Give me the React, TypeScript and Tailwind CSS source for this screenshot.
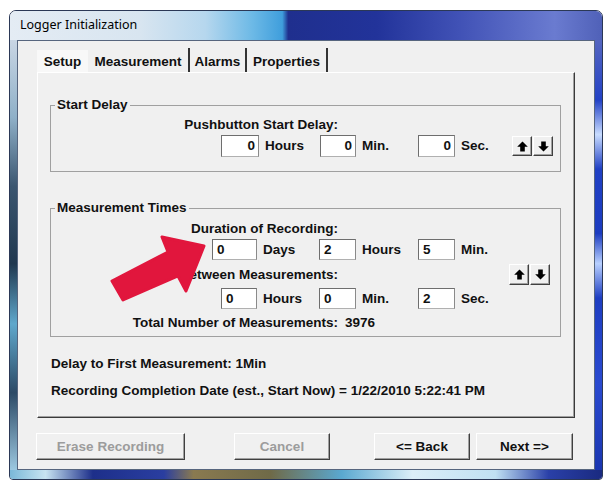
import React from "react";

const ui = "font-['Liberation_Sans',Arial,sans-serif] font-bold text-[13.5px] leading-[16px] text-[#111]";
const raised =
  "bg-[#f0f0f0] border border-t-white border-l-white border-r-[#404040] border-b-[#404040] shadow-[inset_-1px_-1px_0_#a0a0a0]";
const sunken =
  "bg-white border border-t-[#6e6e6e] border-l-[#6e6e6e] border-r-[#8a8a8a] border-b-[#b0b0b0]";

function UpArrow() {
  return (
    <svg width="11" height="11" viewBox="0 0 11 11">
      <path d="M5.5 0.5 L10.8 5.8 H7.8 V10.5 H3.2 V5.8 H0.2 Z" fill="#000" />
    </svg>
  );
}

function DownArrow() {
  return (
    <svg width="11" height="11" viewBox="0 0 11 11">
      <path d="M5.5 10.5 L10.8 5.2 H7.8 V0.5 H3.2 V5.2 H0.2 Z" fill="#000" />
    </svg>
  );
}

function Spin({ h }: { h: string }) {
  return (
    <div className="flex gap-[1px]">
      <div className={`${raised} ${h} w-[20px] flex items-center justify-center`}>
        <UpArrow />
      </div>
      <div className={`${raised} ${h} w-[20px] flex items-center justify-center`}>
        <DownArrow />
      </div>
    </div>
  );
}

function Field({ seg, box, h, value, unit, right }: { seg: string; box: string; h: string; value: string; unit: string; right?: boolean }) {
  return (
    <div className={`flex items-center gap-[6px] ${seg}`}>
      <div className={`${sunken} ${box} ${h} flex items-center ${right ? "justify-end pr-[3px]" : "pl-[4px]"}`}>{value}</div>
      <span>{unit}</span>
    </div>
  );
}

function GroupBox({ title, className, children }: { title: string; className: string; children: React.ReactNode }) {
  return (
    <fieldset className={`ml-[12px] w-[511px] border border-[#a0a0a0] ${className}`}>
      <legend className="ml-[4px] px-[2px] leading-[16px]">{title}</legend>
      {children}
    </fieldset>
  );
}

export default function App() {
  return (
    <div className="relative w-[616px] h-[492px] bg-white overflow-hidden">
      <div className="ml-[9px] mt-[10px] w-[594px] h-[470px] flex flex-col rounded-t-[7px] rounded-b-[4px] overflow-hidden border border-[#2b3856]">
        {/* title bar */}
        <div className="h-[29px] shrink-0 flex items-center pl-[10px] pb-[1px] bg-[linear-gradient(to_right,#e4ecf4_0%,#d8e5f0_22%,#b6d7ee_33%,#6cb9e6_41%,#3f9edc_46%,#1f2f8e_47%,#22339a_62%,#4152b6_76%,#6a7bd0_92%,#5061b8_100%)]">
          <span className="font-['Noto_Sans','Lato',sans-serif] text-[12.5px] text-black">Logger Initialization</span>
        </div>
        <div className="flex flex-1">
          <div className="w-[7px] bg-[linear-gradient(to_bottom,#c9d6e4_0%,#8fb0c8_18%,#3b5670_34%,#20384f_52%,#5fa8cc_66%,#2c4a66_82%,#9cc8e0_100%)]" />
          {/* client */}
          <div className={`${ui} w-[578px] h-[430px] border border-[#56657e] bg-[#f0f0f0]`}>
            {/* tabs */}
            <div className="flex h-[25px] ml-[19px] mt-[6px]">
              <div className="w-[51px] mt-[3px] bg-[#f8f8f8] flex items-center justify-center pt-[2px]">Setup</div>
              <div className="w-[102px] mt-[1px] border-r-2 border-[#333] flex items-center justify-center pt-[4px]">Measurement</div>
              <div className="w-[57px] mt-[1px] border-r-2 border-[#333] flex items-center justify-center pt-[4px]">Alarms</div>
              <div className="w-[81px] mt-[1px] border-r-2 border-[#333] flex items-center justify-center pt-[4px]">Properties</div>
            </div>
            {/* panel */}
            <div className="ml-[19px] w-[538px] h-[346px] border border-t-white border-l-white border-r-[#3a3a3a] border-b-[#3a3a3a] shadow-[inset_-1px_-1px_0_#a0a0a0] pt-[24px]">
              <GroupBox title="Start Delay" className="pt-[4px] pb-[14px]">
                <div className="w-[287px] text-right">Pushbutton Start Delay:</div>
                <div className="flex items-center h-[22px] mt-[2px] pl-[170px]">
                  <Field seg="w-[99px]" box="w-[38px]" h="h-[22px]" value="0" unit="Hours" right />
                  <Field seg="w-[98px]" box="w-[36px]" h="h-[22px]" value="0" unit="Min." right />
                  <Field seg="w-[94px]" box="w-[37px]" h="h-[22px]" value="0" unit="Sec." right />
                  <Spin h="h-[20px]" />
                </div>
              </GroupBox>
              <GroupBox title="Measurement Times" className="mt-[28px] pt-[5px] pb-[5px]">
                <div className="w-[287px] text-right">Duration of Recording:</div>
                <div className="flex items-center h-[21px] mt-[2px] pl-[161px]">
                  <Field seg="w-[107px]" box="w-[45px]" h="h-[21px]" value="0" unit="Days" />
                  <Field seg="w-[99px]" box="w-[37px]" h="h-[21px]" value="2" unit="Hours" />
                  <Field seg="w-[94px]" box="w-[37px]" h="h-[21px]" value="5" unit="Min." />
                </div>
                <div className="flex items-center h-[21px] mt-[4px]">
                  <div className="w-[287px] text-right">Time Between Measurements:</div>
                  <div className="ml-[171px]">
                    <Spin h="h-[21px]" />
                  </div>
                </div>
                <div className="flex items-center h-[21px] mt-[3px] pl-[170px]">
                  <Field seg="w-[98px]" box="w-[36px]" h="h-[21px]" value="0" unit="Hours" />
                  <Field seg="w-[99px]" box="w-[37px]" h="h-[21px]" value="0" unit="Min." />
                  <Field seg="w-[94px]" box="w-[37px]" h="h-[21px]" value="2" unit="Sec." />
                </div>
                <div className="flex mt-[6px]">
                  <div className="w-[287px] text-right">Total Number of Measurements:</div>
                  <span className="ml-[7px]">3976</span>
                </div>
              </GroupBox>
              <div className="ml-[13px] mt-[19px]">Delay to First Measurement: 1Min</div>
              <div className="ml-[13px] mt-[11px]">Recording Completion Date (est., Start Now) = 1/22/2010 5:22:41 PM</div>
            </div>
            {/* buttons */}
            <div className="flex mt-[15px] ml-[18px]">
              <button className={`${raised} w-[149px] h-[27px] text-[#9c9c9c]`}>Erase Recording</button>
              <button className={`${raised} w-[96px] h-[27px] ml-[49px] text-[#9c9c9c]`}>Cancel</button>
              <button className={`${raised} w-[96px] h-[27px] ml-[44px]`}>&lt;= Back</button>
              <button className={`${raised} w-[97px] h-[27px] ml-[6px]`}>Next =&gt;</button>
            </div>
          </div>
          <div className="w-[7px] bg-[linear-gradient(to_bottom,#5566c0_0%,#2342c6_14%,#c8dcff_22%,#2040c4_30%,#1c3cc0_45%,#b8d0ff_52%,#1e3ec2_60%,#2a4ad0_80%,#1a36b0_100%)]" />
        </div>
        <div className="h-[9px] shrink-0 bg-[linear-gradient(to_right,#7ab8d8_0%,#c8e4f2_6%,#1d2f8a_14%,#2a3ea0_26%,#8a7a50_31%,#6f6a48_44%,#5aa8d0_56%,#dbeef8_68%,#c0e0f2_82%,#2a40a8_91%,#1a2a80_100%)]" />
      </div>
      {/* red annotation arrow */}
      <svg className="absolute left-[106px] top-[231px]" width="102" height="74" viewBox="0 0 102 74">
        <polygon
          points="6,50 62,21 56,6 98,15 80,60 72,45 17,69"
          fill="#e1163d"
          stroke="#e1163d"
          strokeWidth="3"
          strokeLinejoin="round"
        />
      </svg>
    </div>
  );
}
